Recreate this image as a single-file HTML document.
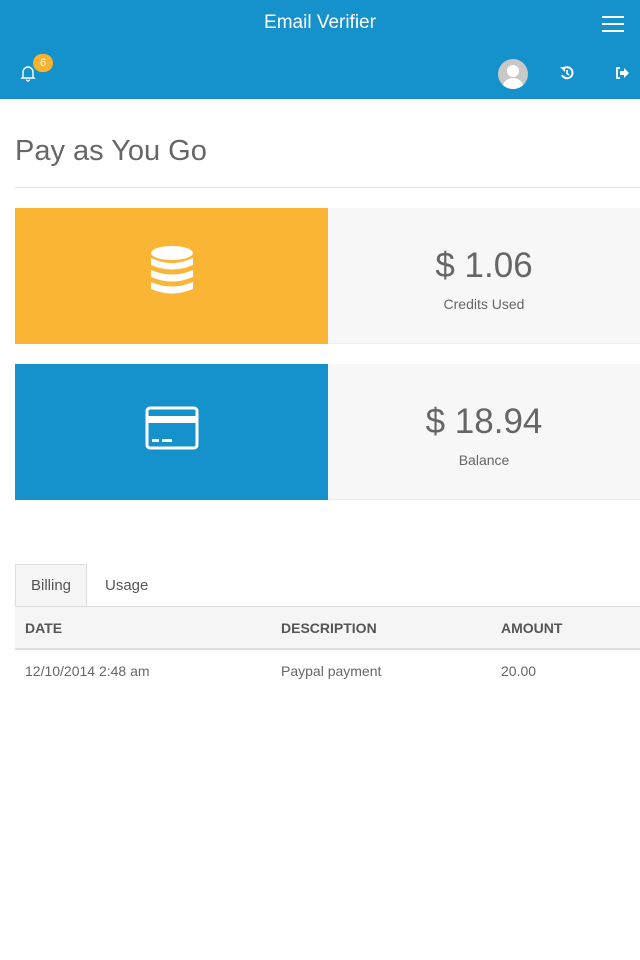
<!DOCTYPE html>
<html><head><style>
*{margin:0;padding:0;box-sizing:border-box}
body{width:640px;height:960px;background:#fff;font-family:"Liberation Sans",sans-serif;position:relative;overflow:hidden;color:#666}
.hdr{position:absolute;left:0;top:0;width:640px;height:99px;background:#1591cb}
.title{position:absolute;top:12px;width:640px;text-align:center;color:#fff;font-size:19px}
.abs{position:absolute}
h1{position:absolute;left:15px;top:135px;font-weight:normal;font-size:29px;color:#666}
.rule{position:absolute;left:15px;top:187px;width:625px;height:1px;background:#e5e5e5}
.box{position:absolute;left:15px;width:313px;height:136px}
.pane{position:absolute;left:328px;width:312px;height:136px;background:#f7f7f7;text-align:center;border-bottom:1px solid #eee}
.big{font-size:35px;color:#666;margin-top:38px}
.lbl{font-size:14px;color:#666;margin-top:10px}
.tab{position:absolute;left:15px;top:564px;width:72px;height:43px;background:#f5f5f5;border:1px solid #ddd;border-bottom:none;font-size:15px;color:#555;text-align:center;line-height:42px}
.th{position:absolute;left:15px;top:606px;width:625px;height:44px;background:#f5f5f5;border-top:1px solid #ddd;border-bottom:2px solid #ddd;font-size:14px;font-weight:bold;color:#555}
.th span,.tr span{position:absolute;top:13px}
.tr{position:absolute;left:15px;top:650px;width:625px;height:40px;font-size:14px;color:#666}
</style></head><body>
<div class="hdr">
 <div class="title">Email Verifier</div>
 <div class="abs" style="left:602px;top:16px;width:22px;height:2px;background:#fff"></div>
 <div class="abs" style="left:602px;top:23px;width:22px;height:2px;background:#fff"></div>
 <div class="abs" style="left:602px;top:30px;width:22px;height:2px;background:#fff"></div>
 <svg class="abs" style="left:19px;top:64px" width="18" height="18" viewBox="0 0 18 18"><path d="M4 13 L4 8 A5 5 0 0 1 14 8 L14 13 L15 14 L3 14 Z M7.5 15.5 A1.5 1.5 0 0 0 10.5 15.5" fill="none" stroke="#fff" stroke-width="1.4"/></svg>
 <div class="abs" style="left:33px;top:54px;width:20px;height:18px;border-radius:9px;background:#fbb231;color:#fff;font-size:11px;text-align:center;line-height:18px">6</div>
 <div class="abs" style="left:498px;top:59px;width:30px;height:30px;border-radius:50%;background:#c8c8c8;overflow:hidden">
  <div class="abs" style="left:9px;top:6px;width:12px;height:12px;border-radius:50%;background:#fff"></div>
  <div class="abs" style="left:4px;top:19px;width:22px;height:16px;border-radius:11px 11px 0 0;background:#fff"></div>
 </div>
 <svg class="abs" style="left:559px;top:65px" width="16" height="16" viewBox="0 0 16 16"><path d="M4 4 A5.5 5.5 0 1 1 3 10" fill="none" stroke="#fff" stroke-width="2"/><path d="M1 2 L6 2 L6 7 Z" fill="#fff"/><path d="M8 5 L8 8.5 L10 10" fill="none" stroke="#fff" stroke-width="1.6"/></svg>
 <svg class="abs" style="left:615px;top:66px" width="16" height="14" viewBox="0 0 16 14"><path d="M5 2 L2 2 L2 12 L5 12" fill="none" stroke="#fff" stroke-width="1.8"/><path d="M5 5 L9 5 L9 2 L14 7 L9 12 L9 9 L5 9 Z" fill="#fff"/></svg>
</div>
<h1>Pay as You Go</h1>
<div class="rule"></div>
<div class="box" style="top:208px;background:#fbb534">
 <svg class="abs" style="left:135px;top:38px" width="44" height="52" viewBox="0 0 44 52"><g fill="#fff"><ellipse cx="22" cy="7" rx="21" ry="7"/><path d="M1 12 Q22 22 43 12 L43 19 Q22 28 1 19Z"/><path d="M1 24 Q22 33 43 24 L43 31 Q22 40 1 31Z"/><path d="M1 36 Q22 45 43 36 L43 43 Q22 52 1 43Z"/></g></svg>
</div>
<div class="pane" style="top:208px"><div class="big">$ 1.06</div><div class="lbl">Credits Used</div></div>
<div class="box" style="top:364px;background:#1591cb">
 <svg class="abs" style="left:130px;top:42px" width="54" height="44" viewBox="0 0 54 44"><rect x="2" y="2" width="50" height="40" rx="3" fill="none" stroke="#fff" stroke-width="3"/><rect x="2" y="10" width="50" height="7" fill="#fff"/><rect x="7" y="33" width="7" height="3" fill="#fff"/><rect x="17" y="33" width="10" height="3" fill="#fff"/></svg>
</div>
<div class="pane" style="top:364px"><div class="big">$ 18.94</div><div class="lbl">Balance</div></div>
<div class="tab">Billing</div>
<div class="abs" style="left:105px;top:577px;font-size:15px;color:#555">Usage</div>
<div class="th"><span style="left:10px">DATE</span><span style="left:266px">DESCRIPTION</span><span style="left:486px">AMOUNT</span></div>
<div class="tr"><span style="left:10px">12/10/2014 2:48 am</span><span style="left:266px">Paypal payment</span><span style="left:486px">20.00</span></div>
</body></html>
